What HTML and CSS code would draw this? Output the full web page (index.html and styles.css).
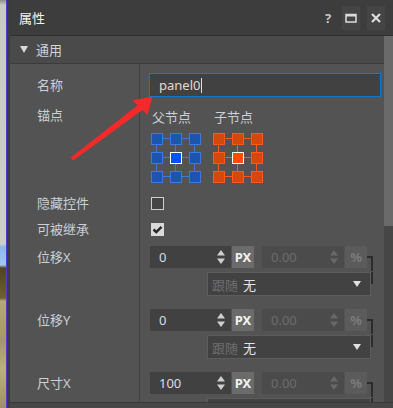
FILE: index.html
```html
<!DOCTYPE html>
<html lang="zh-CN">
<head>
    <meta charset="UTF-8">
    <meta name="viewport" content="width=device-width, initial-scale=1.0">
    <title>属性</title>
    <link rel="stylesheet" href="styles.css">
</head>
<body>
<div class="app">
    <div class="backdrop"></div>
    <div class="edge"></div>
    <div class="panel">
        <div class="titlebar">
            <span class="title">属性</span>
            <div class="tools">
                <span class="tool help">?</span>
                <span class="tool btn">
                    <svg width="12" height="10" viewBox="0 0 12 10"><rect x="1" y="1.5" width="10" height="7.5" fill="none" stroke="#dcdcdc" stroke-width="1.5"/><rect x="1" y="1" width="10" height="2.5" fill="#dcdcdc"/></svg>
                </span>
                <span class="tool btn">
                    <svg width="10" height="10" viewBox="0 0 10 10"><path d="M1 1 L9 9 M9 1 L1 9" stroke="#dcdcdc" stroke-width="2.2"/></svg>
                </span>
            </div>
        </div>

        <div class="main">
            <div class="content">
                <div class="section"><span class="caret"></span>通用</div>

                <!-- 名称 -->
                <div class="row row-name">
                    <div class="label">名称</div>
                    <div class="field">
                        <div class="text-input">panel0<span class="cursor"></span></div>
                    </div>
                </div>

                <!-- 锚点 -->
                <div class="row row-anchor">
                    <div class="label">锚点</div>
                    <div class="field">
                        <div class="anchors">
                            <div class="anchor-col">
                                <div class="anchor-title">父节点</div>
                                <svg class="anchor-grid" width="50" height="50" viewBox="0 0 50 50">
                                    <path d="M5.5 5.5 H44.5 M5.5 24.5 H44.5 M5.5 43.5 H44.5 M5.5 5.5 V44.5 M24.5 5.5 V44.5 M43.5 5.5 V44.5" stroke="#3b78e2" stroke-width="1"/>
                                    <g fill="#1b55ad" stroke="#3a7ae6" stroke-width="1">
                                        <rect x="0.5" y="0.5" width="11" height="11"/>
                                        <rect x="19.5" y="0.5" width="11" height="11"/>
                                        <rect x="38.5" y="0.5" width="11" height="11"/>
                                        <rect x="0.5" y="19.5" width="11" height="11"/>
                                        <rect x="38.5" y="19.5" width="11" height="11"/>
                                        <rect x="0.5" y="38.5" width="11" height="11"/>
                                        <rect x="19.5" y="38.5" width="11" height="11"/>
                                        <rect x="38.5" y="38.5" width="11" height="11"/>
                                    </g>
                                    <rect x="19.5" y="19.5" width="11" height="11" fill="#0052ff" stroke="#ffffff" stroke-width="1"/>
                                </svg>
                            </div>
                            <div class="anchor-col">
                                <div class="anchor-title">子节点</div>
                                <svg class="anchor-grid" width="50" height="50" viewBox="0 0 50 50">
                                    <path d="M5.5 5.5 H44.5 M5.5 24.5 H44.5 M5.5 43.5 H44.5 M5.5 5.5 V44.5 M24.5 5.5 V44.5 M43.5 5.5 V44.5" stroke="#ff5a16" stroke-width="1"/>
                                    <g fill="#d2490b" stroke="#ff5a16" stroke-width="1">
                                        <rect x="0.5" y="0.5" width="11" height="11"/>
                                        <rect x="19.5" y="0.5" width="11" height="11"/>
                                        <rect x="38.5" y="0.5" width="11" height="11"/>
                                        <rect x="0.5" y="19.5" width="11" height="11"/>
                                        <rect x="38.5" y="19.5" width="11" height="11"/>
                                        <rect x="0.5" y="38.5" width="11" height="11"/>
                                        <rect x="19.5" y="38.5" width="11" height="11"/>
                                        <rect x="38.5" y="38.5" width="11" height="11"/>
                                    </g>
                                    <rect x="19.5" y="19.5" width="11" height="11" fill="#ff4d00" stroke="#ffffff" stroke-width="1"/>
                                </svg>
                            </div>
                        </div>
                    </div>
                </div>

                <!-- 复选框 -->
                <div class="row row-check">
                    <div class="label">隐藏控件</div>
                    <div class="field"><span class="checkbox"></span></div>
                </div>
                <div class="row row-check">
                    <div class="label">可被继承</div>
                    <div class="field">
                        <span class="checkbox checked">
                            <svg width="11" height="11" viewBox="0 0 11 11"><path d="M1.5 5.5 L4.3 8 L9.5 2.8" fill="none" stroke="#262626" stroke-width="2.4"/></svg>
                        </span>
                    </div>
                </div>

                <!-- 位移 / 尺寸 -->
                <div class="row row-num">
                    <div class="label">位移X</div>
                    <div class="field">
                        <div class="num-line">
                            <div class="num-input"><span class="value">0</span><svg class="spin" width="8" height="14" viewBox="0 0 8 14"><path d="M4 0 L8 5.5 H0 Z M0 8.5 H8 L4 14 Z" fill="#cfcfcf"/></svg></div>
                            <div class="unit unit-px">PX</div>
                            <div class="num-input off"><span class="value">0.00</span><svg class="spin" width="8" height="14" viewBox="0 0 8 14"><path d="M4 0 L8 5.5 H0 Z M0 8.5 H8 L4 14 Z" fill="#686868"/></svg></div>
                            <div class="unit unit-pct">%</div>
                            <div class="link-top"></div>
                        </div>
                        <div class="follow-line">
                            <div class="dropdown"><span class="follow">跟随</span><span class="follow-val">无</span><span class="drop-caret"></span></div>
                            <div class="link-bot"></div>
                        </div>
                    </div>
                </div>

                <div class="row row-num">
                    <div class="label">位移Y</div>
                    <div class="field">
                        <div class="num-line">
                            <div class="num-input"><span class="value">0</span><svg class="spin" width="8" height="14" viewBox="0 0 8 14"><path d="M4 0 L8 5.5 H0 Z M0 8.5 H8 L4 14 Z" fill="#cfcfcf"/></svg></div>
                            <div class="unit unit-px">PX</div>
                            <div class="num-input off"><span class="value">0.00</span><svg class="spin" width="8" height="14" viewBox="0 0 8 14"><path d="M4 0 L8 5.5 H0 Z M0 8.5 H8 L4 14 Z" fill="#686868"/></svg></div>
                            <div class="unit unit-pct">%</div>
                            <div class="link-top"></div>
                        </div>
                        <div class="follow-line">
                            <div class="dropdown"><span class="follow">跟随</span><span class="follow-val">无</span><span class="drop-caret"></span></div>
                            <div class="link-bot"></div>
                        </div>
                    </div>
                </div>

                <div class="row row-num">
                    <div class="label">尺寸X</div>
                    <div class="field">
                        <div class="num-line">
                            <div class="num-input"><span class="value">100</span><svg class="spin" width="8" height="14" viewBox="0 0 8 14"><path d="M4 0 L8 5.5 H0 Z M0 8.5 H8 L4 14 Z" fill="#cfcfcf"/></svg></div>
                            <div class="unit unit-px">PX</div>
                            <div class="num-input off"><span class="value">0.00</span><svg class="spin" width="8" height="14" viewBox="0 0 8 14"><path d="M4 0 L8 5.5 H0 Z M0 8.5 H8 L4 14 Z" fill="#686868"/></svg></div>
                            <div class="unit unit-pct">%</div>
                            <div class="link-top"></div>
                        </div>
                        <div class="follow-line">
                            <div class="dropdown"><span class="follow">跟随</span><span class="follow-val">无</span><span class="drop-caret"></span></div>
                            <div class="link-bot"></div>
                        </div>
                    </div>
                </div>
            </div>
            <div class="scrollbar"><div class="thumb"></div></div>
        </div>
        <div class="statusbar"></div>
    </div>
</div>

<!-- 红色箭头标注 -->
<svg class="arrow" width="393" height="408" viewBox="0 0 393 408">
    <polygon points="70.8,157.4 137.6,105.2 132.5,100.5 152.5,96.5 147.5,115 142.4,110 73.2,160.6" fill="#f42a2a"/>
</svg>
</body>
</html>
```

FILE: styles.css
```css
body {
    margin: 0;
    width: 393px;
    height: 408px;
    overflow: hidden;
    font-family: "Noto Sans", "Noto Sans CJK SC", sans-serif;
    font-size: 13px;
    position: relative;
}
.app {
    display: flex;
    height: 408px;
}
.backdrop {
    width: 6px;
    background: linear-gradient(to bottom, #8e8e8e 0, #c9c9c9 5px, #cdcdcd 244px, #8cb6ee 247px, #a2c6f3 265px, #4f4226 268px, #6f5e38 298px, #b7a77d 301px, #a6966a 340px, #bcae86 370px, #9f8f63 408px);
}
.edge {
    width: 1px;
    background: #4a3ed2;
}
.panel {
    flex: 1;
    min-width: 0;
    display: flex;
    flex-direction: column;
    border-left: 3px solid #3c3c3c;
    background: #535353;
}

/* 标题栏 */
.titlebar {
    height: 35px;
    flex-shrink: 0;
    display: flex;
    align-items: center;
    padding: 0 8px 0 9px;
    background: #3d3d3d;
    border-bottom: 1px solid #2f2f2f;
}
.title {
    flex: 1;
    color: #f2f2f2;
}
.tools {
    display: flex;
    align-items: center;
    gap: 7px;
}
.tool {
    height: 24px;
    display: flex;
    align-items: center;
    justify-content: center;
}
.help {
    width: 14px;
    color: #c8c8c8;
    font-weight: bold;
}
.btn {
    width: 18px;
    background: #454545;
}

.main {
    flex: 1;
    min-height: 0;
    display: flex;
}
.content {
    flex: 1;
    min-width: 0;
    overflow: hidden;
}
.scrollbar {
    width: 9px;
    background: #464646;
}
.thumb {
    height: 190px;
    background: #6a6a6a;
}
.statusbar {
    height: 5px;
    background: #474747;
    border-top: 1px solid #393939;
}

/* 分组标题 */
.section {
    height: 27px;
    display: flex;
    align-items: center;
    padding-left: 10px;
    background: #4a4a4a;
    border-bottom: 1px solid #3b3b3b;
    color: #cdd5de;
}
.caret {
    width: 0;
    height: 0;
    border-left: 4px solid transparent;
    border-right: 4px solid transparent;
    border-top: 7px solid #d8d8d8;
    margin-right: 8px;
}

/* 属性行 */
.row {
    display: flex;
}
.label {
    width: 130px;
    box-sizing: border-box;
    padding-left: 27px;
    border-right: 1px solid #414141;
    color: #cbd0d6;
}
.field {
    flex: 1;
    padding-left: 10px;
}

.row-name .label {
    padding-top: 9px;
    line-height: 24px;
}
.row-name .field {
    padding: 9px 0 6px 9px;
}
.text-input {
    width: 232px;
    height: 24px;
    box-sizing: border-box;
    border: 1px solid #0a7ad9;
    background: #414141;
    padding-left: 9px;
    line-height: 22px;
    color: #e2dcd4;
    display: flex;
    align-items: center;
}
.cursor {
    width: 1px;
    height: 15px;
    margin-left: 1px;
    background: #dddddd;
}

.row-anchor .label {
    padding-top: 2px;
    line-height: 20px;
}
.row-anchor .field {
    padding-top: 4px;
    padding-bottom: 7px;
}
.anchors {
    display: flex;
    gap: 12px;
    margin-left: 1px;
}
.anchor-col {
    width: 50px;
}
.anchor-title {
    line-height: 20px;
    color: #cbd0d6;
    padding-left: 1px;
    white-space: nowrap;
}
.anchor-grid {
    display: block;
    margin-top: 6px;
}

.row-check .label {
    line-height: 26px;
}
.row-check .field {
    height: 26px;
    display: flex;
    align-items: center;
}
.checkbox {
    width: 13px;
    height: 13px;
    box-sizing: border-box;
    margin-left: 1px;
    border: 1px solid #cfcfcf;
    background: #454545;
    display: flex;
    align-items: center;
    justify-content: center;
}
.checkbox.checked {
    background: #dadada;
    border-color: #dadada;
}

.row-num .label {
    padding-top: 4px;
    line-height: 22px;
}
.row-num .field {
    padding-top: 4px;
    padding-bottom: 9px;
}
.num-line {
    display: flex;
    align-items: flex-start;
}
.num-input {
    width: 81px;
    height: 22px;
    box-sizing: border-box;
    display: flex;
    align-items: center;
    padding: 0 6px 0 9px;
    background: #414141;
    color: #d8dde2;
}
.num-input .value {
    flex: 1;
}
.num-input.off {
    width: 82px;
    margin-left: 8px;
    background: #4b4b4b;
    color: #6c6c6c;
}
.unit {
    width: 22px;
    height: 22px;
    margin-left: 1px;
    display: flex;
    align-items: center;
    justify-content: center;
    font-weight: bold;
}
.unit-px {
    background: #6b6b6b;
    color: #f2f2f2;
}
.unit-pct {
    background: #5b5b5b;
    color: #7a7a7a;
}
.link-top {
    width: 4px;
    height: 13px;
    margin-top: 10px;
    margin-bottom: -4px;
    border-top: 2px solid #2c2c2c;
    border-right: 2px solid #2c2c2c;
}
.follow-line {
    display: flex;
    margin-top: 4px;
}
.dropdown {
    width: 164px;
    height: 24px;
    box-sizing: border-box;
    margin-left: 57px;
    display: flex;
    align-items: center;
    padding: 0 9px 0 4px;
    border: 1px solid #5c5c5c;
    background: #424242;
}
.follow {
    color: #6e6e6e;
}
.follow-val {
    margin-left: 5px;
    color: #e4e4e4;
}
.drop-caret {
    margin-left: auto;
    width: 0;
    height: 0;
    border-left: 4px solid transparent;
    border-right: 4px solid transparent;
    border-top: 6px solid #e0e0e0;
}
.link-bot {
    width: 0;
    height: 12px;
    border-right: 2px solid #2c2c2c;
}

.arrow {
    position: absolute;
    top: 0;
    left: 0;
    pointer-events: none;
}
```
